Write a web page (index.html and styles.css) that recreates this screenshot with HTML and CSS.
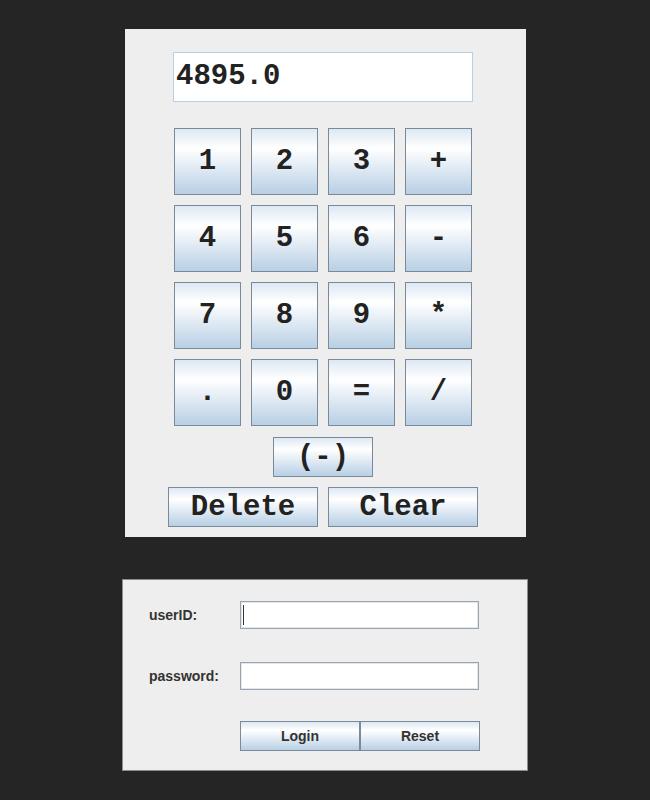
FILE: index.html
```html
<!DOCTYPE html>
<html>
<head>
<meta charset="utf-8">
<link rel="stylesheet" href="styles.css">
</head>
<body>
<div class="calc">
  <div class="calc-inner">
    <div class="display">4895.0</div>
    <div class="keys">
      <button class="btn key">1</button>
      <button class="btn key">2</button>
      <button class="btn key">3</button>
      <button class="btn key">+</button>
      <button class="btn key">4</button>
      <button class="btn key">5</button>
      <button class="btn key">6</button>
      <button class="btn key">-</button>
      <button class="btn key">7</button>
      <button class="btn key">8</button>
      <button class="btn key">9</button>
      <button class="btn key">*</button>
      <button class="btn key">.</button>
      <button class="btn key">0</button>
      <button class="btn key">=</button>
      <button class="btn key">/</button>
    </div>
    <button class="btn neg">(-)</button>
    <div class="actions">
      <button class="btn wide">Delete</button>
      <button class="btn wide">Clear</button>
    </div>
  </div>
</div>

<div class="login">
  <div class="row">
    <span class="label">userID:</span>
    <div class="field"><span class="caret"></span></div>
  </div>
  <div class="row row-pass">
    <span class="label">password:</span>
    <div class="field"></div>
  </div>
  <div class="row-buttons">
    <button class="lbtn">Login</button>
    <button class="lbtn">Reset</button>
  </div>
</div>
</body>
</html>
```

FILE: styles.css
```css
html, body {
  margin: 0;
  padding: 0;
  background: #252525;
}

body {
  width: 650px;
  height: 800px;
  padding-top: 29px;
  box-sizing: border-box;
}

.calc {
  width: 401px;
  height: 508px;
  margin-left: 125px;
  background: #eeeeee;
  box-sizing: border-box;
  padding-top: 23px;
}

.calc-inner {
  width: 310px;
  margin-left: 43px;
  display: flex;
  flex-direction: column;
}

.display {
  width: 300px;
  height: 50px;
  margin-left: 5px;
  box-sizing: border-box;
  border: 1px solid #b8cfe5;
  background: #ffffff;
  font-family: "Liberation Mono", "Courier New", monospace;
  font-weight: bold;
  font-size: 29px;
  color: #222222;
  line-height: 48px;
  padding-left: 2px;
}

.btn {
  box-sizing: border-box;
  border: 1px solid #7a8a99;
  background: linear-gradient(to bottom, #dde8f3 0%, #ffffff 30%, #b8cfe5 100%);
  font-family: "Liberation Mono", "Courier New", monospace;
  font-weight: bold;
  font-size: 29px;
  color: #222222;
  padding: 0;
  margin: 0;
  display: flex;
  align-items: center;
  justify-content: center;
}

.keys {
  margin-top: 26px;
  margin-left: 6px;
  display: grid;
  grid-template-columns: repeat(4, 67px);
  grid-auto-rows: 67px;
  gap: 10px;
}

.neg {
  width: 100px;
  height: 40px;
  margin-top: 11px;
  align-self: center;
}

.actions {
  margin-top: 10px;
  display: flex;
  gap: 10px;
}

.wide {
  width: 150px;
  height: 40px;
}

.login {
  width: 406px;
  height: 192px;
  margin-top: 42px;
  margin-left: 122px;
  background: #eeeeee;
  box-sizing: border-box;
  border: 1px solid #8c8c8c;
  padding-top: 21px;
  padding-left: 26px;
  font-family: "Liberation Sans", Arial, sans-serif;
}

.row {
  display: flex;
  align-items: center;
  height: 28px;
}

.row-pass {
  margin-top: 33px;
}

.label {
  width: 91px;
  font-weight: bold;
  font-size: 14px;
  color: #333333;
}

.field {
  width: 239px;
  height: 28px;
  box-sizing: border-box;
  border: 1px solid #9ba5ae;
  box-shadow: inset 0 0 0 1px #e2e6ea;
  background: #ffffff;
  display: flex;
  align-items: center;
  padding-left: 2px;
}

.caret {
  width: 1px;
  height: 20px;
  background: #333333;
}

.row-buttons {
  margin-top: 31px;
  margin-left: 91px;
  display: flex;
}

.lbtn {
  width: 120px;
  height: 30px;
  box-sizing: border-box;
  border: 1px solid #7a8a99;
  background: linear-gradient(to bottom, #dde8f3 0%, #ffffff 30%, #b8cfe5 100%);
  font-family: "Liberation Sans", Arial, sans-serif;
  font-weight: bold;
  font-size: 14px;
  color: #333333;
  padding: 0;
  margin: 0;
}
```
